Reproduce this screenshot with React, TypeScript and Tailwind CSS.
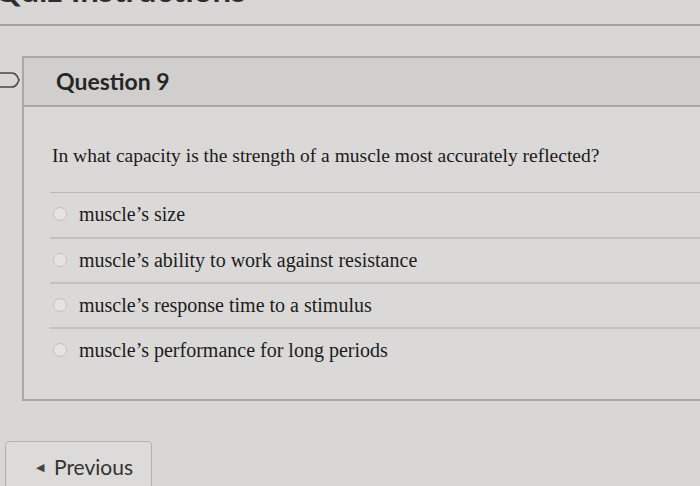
import { ReactNode } from 'react'

const options = [
  'muscle’s size',
  'muscle’s ability to work against resistance',
  'muscle’s response time to a stimulus',
  'muscle’s performance for long periods',
]

function FlagIcon() {
  return (
    <svg width="22" height="18" viewBox="0 0 22 18" className="block">
      <path
        d="M-2 2 H12 Q15 2 17 5 L19 9 L17 13 Q15 16 12 16 H-2"
        fill="none"
        stroke="#4a4a4a"
        strokeWidth="1.6"
      />
    </svg>
  )
}

function Option({ children, first }: { children: ReactNode; first?: boolean }) {
  return (
    <div
      className={
        'flex items-center gap-[12px] h-[45px] pl-[3px] pb-[2px] ' +
        (first ? 'border-t border-[#b9b8b6]' : 'border-t-2 border-[#c3c2c0]')
      }
    >
      <span className="w-[14px] h-[14px] shrink-0 rounded-full border border-[#c2c1bf] bg-[#e4e3e1]" />
      <span className="font-['Liberation_Serif',serif] text-[20px] leading-6 text-[#1c1c1c]">
        {children}
      </span>
    </div>
  )
}

export default function App() {
  return (
    <div className="w-[700px] h-[486px] overflow-hidden bg-[#d8d7d5] font-['Lato',sans-serif]">
      {/* cut-off page title */}
      <div className="h-[26px] overflow-hidden border-b-2 border-[#a3a2a0]">
        <div className="-mt-[36px] -ml-[6px] text-[33px] leading-[50px] font-bold text-[#2d2d2d]">
          Quiz Instructions
        </div>
      </div>

      <div className="flex mt-[30px]">
        <div className="w-[22px] shrink-0 pt-[15px]">
          <FlagIcon />
        </div>

        <div className="flex-1 -mr-[10px] border-2 border-[#a9a8a6] bg-[#dad9d7]">
          <div className="h-[49px] flex items-center pl-[32px] bg-[#d0cfcd] border-b-2 border-[#a9a8a6]">
            <h2 className="text-[23px] font-bold text-[#262626]">Question 9</h2>
          </div>

          <div className="pt-[37px] pb-[27px]">
            <p className="pl-[28px] font-['Liberation_Serif',serif] text-[19.5px] leading-6 text-[#1a1a1a]">
              In what capacity is the strength of a muscle most accurately reflected?
            </p>
            <div className="mt-[24px] ml-[26px]">
              {options.map((o, i) => (
                <Option key={o} first={i === 0}>
                  {o}
                </Option>
              ))}
            </div>
          </div>
        </div>
      </div>

      <button className="mt-[40px] ml-[5px] w-[147px] h-[60px] flex items-start pt-[13px] pl-[30px] gap-[10px] border border-[#b3b2b0] rounded-[4px] bg-[#dcdbd9] text-[21px] leading-6 text-[#333]">
        <span className="text-[11px] leading-6 text-[#444]">◀</span>
        Previous
      </button>
    </div>
  )
}
